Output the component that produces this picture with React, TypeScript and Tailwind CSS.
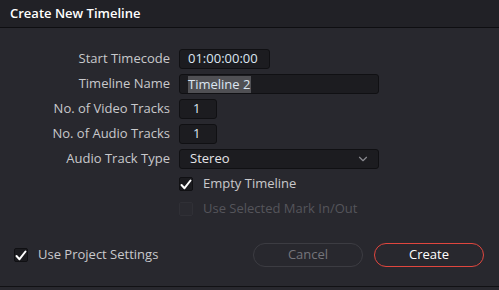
import { ChevronDown } from "lucide-react";

const font = { fontFamily: '"Open Sans", "Noto Sans", sans-serif' };

function Check({ checked, disabled }: { checked?: boolean; disabled?: boolean }) {
  return (
    <span
      className={
        "flex h-[14px] w-[14px] items-center justify-center rounded-[2px] border " +
        (disabled ? "border-[#303036] bg-[#2a2a30]" : "border-[#101013] bg-[#1b1b1f]")
      }
    >
      {checked && (
        <svg width="12" height="11" viewBox="0 0 12 11">
          <path d="M1.5 6 L4.5 9.2 L10.5 1.5" fill="none" stroke="#fff" strokeWidth="2" strokeLinecap="round" strokeLinejoin="round" />
        </svg>
      )}
    </span>
  );
}

const rows = [
  { label: "Start Timecode", w: "w-[91px]", value: "01:00:00:00", pad: "pl-[8px]" },
  { label: "Timeline Name", w: "w-[200px]", value: "Timeline 2", pad: "pl-[8px]", selected: true },
  { label: "No. of Video Tracks", w: "w-[38px]", value: "1", pad: "pl-[13px]" },
  { label: "No. of Audio Tracks", w: "w-[38px]", value: "1", pad: "pl-[13px]" },
];

export default function App() {
  return (
    <div className="h-[290px] w-[499px] overflow-hidden bg-[#28282e] text-[13px] text-[#c9c9cc]" style={font}>
      <div className="flex h-[28px] items-center border-b border-[#0e0e11] bg-[#212126] pl-[10px] text-[13px] font-semibold text-white">
        Create New Timeline
      </div>
      <div className="flex h-[259px] flex-col border-b border-[#111114] pt-[21px]">
        <div className="grid grid-cols-[170px_1fr] gap-x-[9px] gap-y-[5px]">
          {rows.map((r) => (
            <div key={r.label} className="contents">
              <div className="flex h-[20px] items-center justify-end">{r.label}</div>
              <div
                className={
                  "flex h-[20px] items-center rounded-[3px] border border-[#101013] bg-[#1c1c20] text-[#dce6f2] " +
                  r.w + " " + r.pad
                }
              >
                {r.selected ? <span className="bg-[#505054] pr-[1px] leading-[17px]">{r.value}</span> : r.value}
              </div>
            </div>
          ))}
          <div className="flex h-[20px] items-center justify-end">Audio Track Type</div>
          <div className="flex h-[20px] w-[200px] items-center justify-between rounded-[3px] border border-[#101013] bg-[#1c1c20] pl-[10px] pr-[8px] text-[#e4e4e8]">
            Stereo
            <ChevronDown size={14} strokeWidth={2} className="text-[#8a8a90]" />
          </div>
          <div />
          <div className="flex h-[20px] items-center gap-[10px]">
            <Check checked />
            <span>Empty Timeline</span>
          </div>
          <div />
          <div className="flex h-[20px] items-center gap-[10px] text-[#55555b]">
            <Check disabled />
            <span>Use Selected Mark In/Out</span>
          </div>
        </div>
        <div className="mt-auto mb-[19px] flex items-center justify-between pl-[14px] pr-[15px]">
          <div className="flex items-center gap-[10px]">
            <Check checked />
            <span>Use Project Settings</span>
          </div>
          <div className="flex gap-[11px]">
            <button className="h-[24px] w-[110px] rounded-full border border-[#3c3c42] text-[#75757b]">Cancel</button>
            <button className="h-[24px] w-[110px] rounded-full border border-[#e0463e] text-white">Create</button>
          </div>
        </div>
      </div>
    </div>
  );
}
